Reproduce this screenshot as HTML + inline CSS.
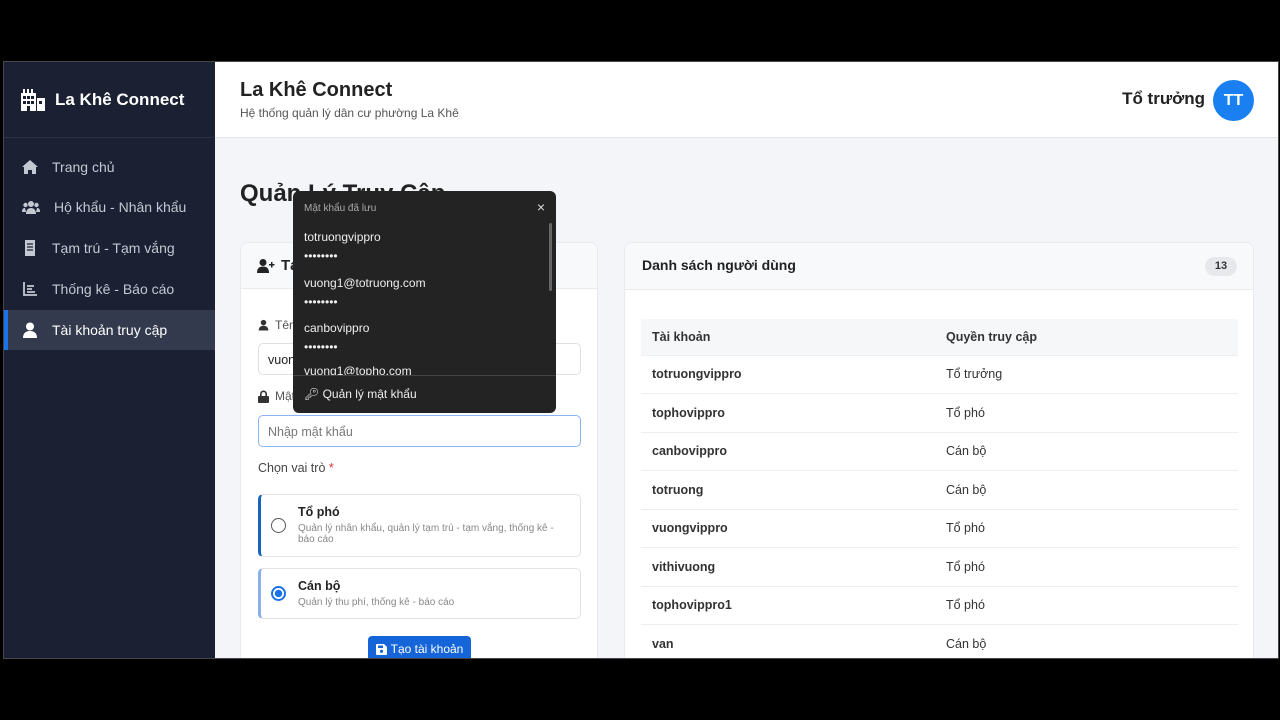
<!DOCTYPE html>
<html><head><meta charset="utf-8"><style>
*{box-sizing:border-box;margin:0;padding:0}
body{width:1280px;height:720px;background:#000;font-family:"Liberation Sans",sans-serif;position:relative;overflow:hidden}
.app{position:absolute;left:3px;top:61px;width:1276px;height:598px;background:#f3f5f8;overflow:hidden;border:1px solid #444}
.side{position:absolute;left:0;top:0;width:211px;height:598px;background:#1b2033}
.logo{height:76px;border-bottom:1px solid #2c3245;display:flex;align-items:center;padding-left:16px;color:#fff;font-weight:bold;font-size:17px}
.nav{position:absolute;left:0;width:211px;height:40px;display:flex;align-items:center;padding-left:18px;color:#c4c8d3;font-size:14px}
.nav svg{margin-right:14px}
.nav.act{background:#343a4d;color:#fff;border-left:4px solid #1a73e8;padding-left:14px}
.hdr{position:absolute;left:211px;top:0;right:0;height:76px;background:#fff;border-bottom:1px solid #e3e6ea}
.abs{position:absolute}
.card{position:absolute;background:#fff;border:1px solid #e8eaee;border-radius:8px;overflow:hidden}
td{font-size:12.5px;height:38.5px;border-bottom:1px solid #eceef1;color:#333}
</style></head><body>
<div class="app">
<div class="side">
 <div class="logo"><svg width="26" height="22" viewBox="0 0 26 22"><path fill="#fff" d="M1 4h15v18H1zM17 9h8v13h-8zM3 0h2v4H3zM7 0h2v4H7zM11 0h2v4h-2z"/><g fill="#1b2033"><rect x="3" y="7" width="3" height="3"/><rect x="7" y="7" width="3" height="3"/><rect x="11" y="7" width="3" height="3"/><rect x="3" y="12" width="3" height="3"/><rect x="7" y="12" width="3" height="3"/><rect x="11" y="12" width="3" height="3"/><rect x="19" y="12" width="3" height="3"/><rect x="7" y="17" width="3" height="5"/></g></svg><span style="margin-left:9px">La Khê Connect</span></div>
 <div class="nav" style="top:85px"><svg width="16" height="14" viewBox="0 0 16 14"><path fill="#c4c8d3" d="M8 0l8 7h-2v7h-4v-4H6v4H2V7H0z"/></svg>Trang chủ</div>
 <div class="nav" style="top:125px"><svg width="18" height="14" viewBox="0 0 18 14"><g fill="#c4c8d3"><circle cx="9" cy="4" r="3"/><circle cx="3.5" cy="5" r="2.2"/><circle cx="14.5" cy="5" r="2.2"/><path d="M4 14c0-4 2-6 5-6s5 2 5 6zM0 12c0-3 1-4 3-4l1 4zM18 12c0-3-1-4-3-4l-1 4z"/></g></svg>Hộ khẩu - Nhân khẩu</div>
 <div class="nav" style="top:166px"><svg width="16" height="16" viewBox="0 0 16 16"><path fill="#c4c8d3" d="M3 0h10v16H3z"/><path stroke="#1b2033" stroke-width="1.3" d="M5 4h6M5 7h6M5 10h6"/></svg>Tạm trú - Tạm vắng</div>
 <div class="nav" style="top:207px"><svg width="16" height="16" viewBox="0 0 16 16"><path fill="none" stroke="#c4c8d3" stroke-width="1.8" d="M2 1v13h13M5 5h7M5 8h5M5 11h8"/></svg>Thống kê - Báo cáo</div>
 <div class="nav act" style="top:248px"><svg width="16" height="16" viewBox="0 0 16 16"><g fill="#fff"><circle cx="8" cy="4.5" r="4"/><path d="M1 16c0-5 3-7 7-7s7 2 7 7z"/></g></svg>Tài khoản truy cập</div>
</div>
<div class="hdr">
 <div class="abs" style="left:25px;top:17px;font-size:20px;font-weight:bold;color:#222">La Khê Connect</div>
 <div class="abs" style="left:25px;top:44px;font-size:12px;color:#555">Hệ thống quản lý dân cư phường La Khê</div>
 <div class="abs" style="right:73px;top:27px;font-size:17px;font-weight:bold;color:#222">Tổ trưởng</div>
 <div class="abs" style="right:24px;top:18px;width:41px;height:41px;border-radius:50%;background:#1a7ff0;color:#fff;font-weight:bold;font-size:16px;text-align:center;line-height:41px">TT</div>
</div>
<div class="abs" style="left:236px;top:118px;font-size:24px;font-weight:bold;color:#222">Quản Lý Truy Cập</div>
<div class="card" style="left:236px;top:180px;width:358px;height:430px">
 <div style="height:46px;background:#f8f9fb;border-bottom:1px solid #e8eaee;padding:14px 16px;font-weight:bold;font-size:15px;color:#222;display:flex;align-items:center"><svg width="18" height="14" viewBox="0 0 18 14" style="margin-right:6px"><g fill="#222"><circle cx="6" cy="3.5" r="3.5"/><path d="M0 14c0-5 2.5-6.5 6-6.5s6 1.5 6 6.5z"/><path d="M14 3h1.5v2h2v1.5h-2v2H14v-2h-2V5h2z"/></g></svg>Tạo tài khoản mới</div>
 <div class="abs" style="left:17px;top:75px;font-size:12px;color:#555;display:flex;align-items:center"><svg width="11" height="12" viewBox="0 0 16 16" style="margin-right:6px"><g fill="#333"><circle cx="8" cy="4.5" r="4"/><path d="M1 16c0-5 3-7 7-7s7 2 7 7z"/></g></svg>Tên đăng nhập</div>
 <div class="abs" style="left:17px;top:100px;width:323px;height:32px;border:1px solid #dde0e4;border-radius:5px;padding:9px;font-size:12.5px;color:#222">vuong</div>
 <div class="abs" style="left:17px;top:146px;font-size:12px;color:#555;display:flex;align-items:center"><svg width="11" height="13" viewBox="0 0 11 13" style="margin-right:6px"><path fill="none" stroke="#333" stroke-width="1.6" d="M2.8 6V4a2.7 2.7 0 015.4 0v2"/><rect x="0" y="6" width="11" height="7" rx="1" fill="#333"/></svg>Mật khẩu</div>
 <div class="abs" style="left:17px;top:172px;width:323px;height:32px;border:1px solid #8ab4f8;border-radius:5px;padding:9px;font-size:12.5px;color:#777">Nhập mật khẩu</div>
 <div class="abs" style="left:17px;top:218px;font-size:12.5px;color:#444">Chọn vai trò <span style="color:#d33">*</span></div>
 <div class="abs" style="left:17px;top:251px;width:323px;height:63px;border:1px solid #e0e3e7;border-left:3px solid #1565c0;border-radius:5px">
  <div class="abs" style="left:10px;top:23px;width:15px;height:15px;border:1px solid #555;border-radius:50%"></div>
  <div class="abs" style="left:37px;top:10px;font-size:12.5px;font-weight:bold;color:#222">Tổ phó</div>
  <div class="abs" style="left:37px;top:28px;width:270px;font-size:10px;color:#888;line-height:11px">Quản lý nhân khẩu, quản lý tạm trú - tạm vắng, thống kê - báo cáo</div>
 </div>
 <div class="abs" style="left:17px;top:325px;width:323px;height:51px;border:1px solid #e0e3e7;border-left:3px solid #8ab0e8;border-radius:5px">
  <div class="abs" style="left:10px;top:17px;width:15px;height:15px;border:2px solid #1a73e8;border-radius:50%;background:radial-gradient(#1a73e8 45%,#fff 50%)"></div>
  <div class="abs" style="left:37px;top:10px;font-size:12.5px;font-weight:bold;color:#222">Cán bộ</div>
  <div class="abs" style="left:37px;top:28px;font-size:10px;color:#888">Quản lý thu phí, thống kê - báo cáo</div>
 </div>
 <div class="abs" style="left:127px;top:393px;width:103px;height:30px;background:#1565d8;border-radius:4px;color:#fff;font-size:12px;display:flex;align-items:center;justify-content:center;padding-bottom:4px"><svg width="11" height="11" viewBox="0 0 11 11" style="margin-right:4px"><path fill="#fff" d="M0 1a1 1 0 011-1h7l3 3v7a1 1 0 01-1 1H1a1 1 0 01-1-1z"/><rect x="2" y="1.5" width="5" height="2.5" fill="#1565d8"/><circle cx="5.5" cy="7.3" r="1.6" fill="#1565d8"/></svg>Tạo tài khoản</div>
</div>
<div class="card" style="left:620px;top:180px;width:630px;height:430px">
 <div style="height:47px;background:#f8f9fb;border-bottom:1px solid #e8eaee;padding:14px 17px;font-weight:bold;font-size:14px;color:#222">Danh sách người dùng</div>
 <div class="abs" style="right:16px;top:14px;width:32px;height:19px;background:#e6e8eb;border-radius:10px;font-size:11px;font-weight:bold;text-align:center;line-height:19px;color:#333">13</div>
 <table class="abs" style="left:16px;top:76px;width:597px;border-collapse:collapse">
  <tr style="background:#f6f7f9"><td style="padding-left:11px;font-weight:bold;width:305px;height:36px">Tài khoản</td><td style="font-weight:bold;height:36px">Quyền truy cập</td></tr>
  <tr><td style="padding-left:11px;font-weight:bold">totruongvippro</td><td>Tổ trưởng</td></tr>
  <tr><td style="padding-left:11px;font-weight:bold">tophovippro</td><td>Tổ phó</td></tr>
  <tr><td style="padding-left:11px;font-weight:bold">canbovippro</td><td>Cán bộ</td></tr>
  <tr><td style="padding-left:11px;font-weight:bold">totruong</td><td>Cán bộ</td></tr>
  <tr><td style="padding-left:11px;font-weight:bold">vuongvippro</td><td>Tổ phó</td></tr>
  <tr><td style="padding-left:11px;font-weight:bold">vithivuong</td><td>Tổ phó</td></tr>
  <tr><td style="padding-left:11px;font-weight:bold">tophovippro1</td><td>Tổ phó</td></tr>
  <tr><td style="padding-left:11px;font-weight:bold">van</td><td>Cán bộ</td></tr>
 </table>
</div>
<div class="abs" style="left:289px;top:129px;width:263px;height:222px;background:#232323;border-radius:6px;color:#eee;overflow:hidden">
 <div class="abs" style="left:11px;top:12px;font-size:10px;color:#aaa">Mật khẩu đã lưu</div>
 <div class="abs" style="right:11px;top:8px;font-size:14px;color:#ddd">×</div>
 <div class="abs" style="right:4px;top:32px;width:3px;height:68px;background:#666;border-radius:2px"></div>
 <div class="abs" style="left:11px;top:37px;font-size:12px;line-height:19px">totruongvippro<br>••••••••</div>
 <div class="abs" style="left:11px;top:83px;font-size:12px;line-height:19px">vuong1@totruong.com<br>••••••••</div>
 <div class="abs" style="left:11px;top:128px;font-size:12px;line-height:19px">canbovippro<br>••••••••</div>
 <div class="abs" style="left:11px;top:173px;font-size:12px;height:11px;overflow:hidden">vuong1@topho.com</div>
 <div class="abs" style="left:0;top:184px;width:263px;height:1px;background:#444"></div>
 <div class="abs" style="left:11px;top:196px;font-size:12px">&#128273;&#xFE0E; Quản lý mật khẩu</div>
</div>
</div>
</body></html>
